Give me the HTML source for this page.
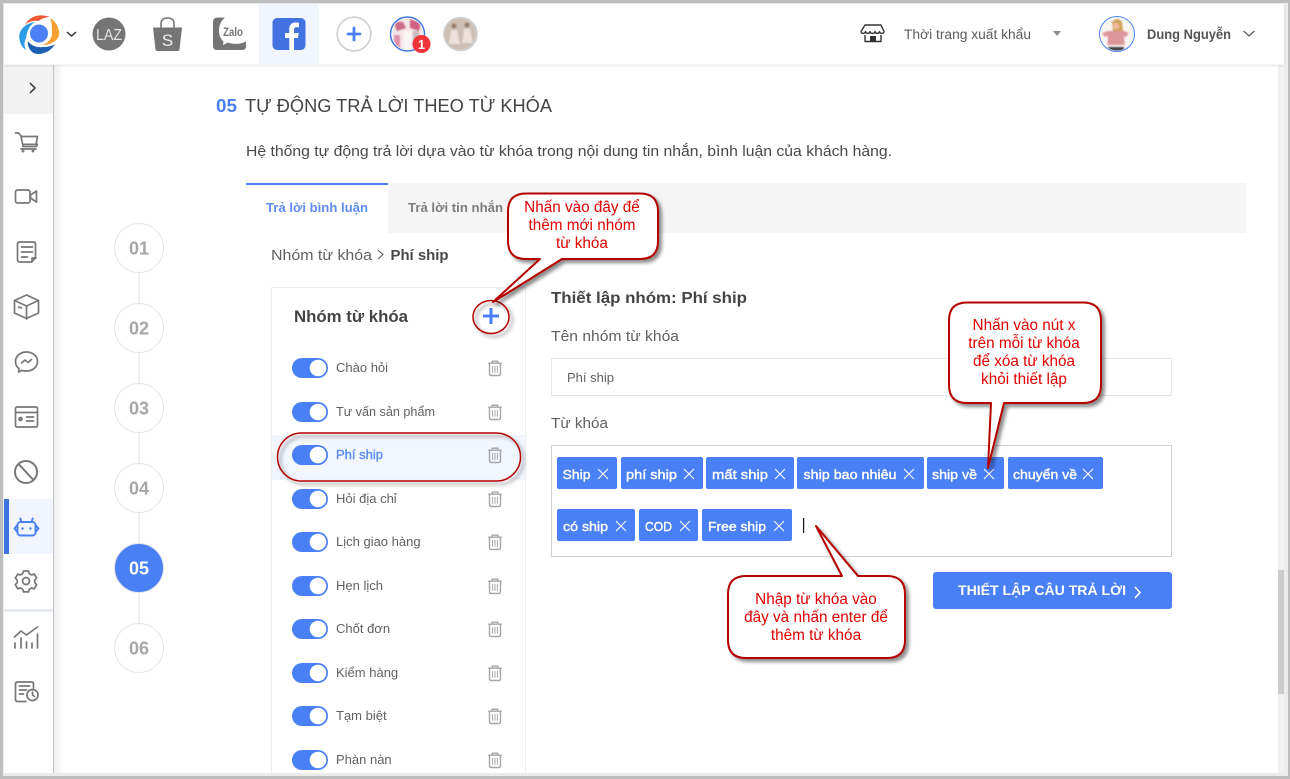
<!DOCTYPE html>
<html lang="vi">
<head>
<meta charset="utf-8">
<title>Tự động trả lời theo từ khóa</title>
<style>
html,body{margin:0;padding:0;background:#fff;width:1290px;height:779px;overflow:hidden}
svg{display:block}
text{font-family:"Liberation Sans",Arial,sans-serif}
.nav{fill:none;stroke:#777;stroke-width:1.7;stroke-linecap:round;stroke-linejoin:round}
.item{font-size:13px;fill:#616161}
.chip{font-size:13px;fill:#fff;stroke:#fff;stroke-width:.4}
.x{stroke:#fff;stroke-width:1.1;fill:none}
.red{font-size:15.300px;fill:#e00000;text-anchor:middle}
.co{fill:#fff;stroke:#b40000;stroke-width:2;stroke-linejoin:round;filter:url(#ds)}
.step{font-size:18px;font-weight:bold;fill:#a6a6a6;text-anchor:middle}
</style>
</head>
<body>
<svg width="1290" height="779" viewBox="0 0 1290 779" xmlns="http://www.w3.org/2000/svg">
<defs>
<filter id="ds" x="-20%" y="-20%" width="140%" height="140%"><feDropShadow dx="3" dy="3" stdDeviation="1.8" flood-color="#000" flood-opacity=".45"/></filter>
<filter id="hs" x="-5%" y="-20%" width="110%" height="150%"><feDropShadow dx="0" dy="1" stdDeviation="1.2" flood-color="#000" flood-opacity=".12"/></filter>
<filter id="b1"><feGaussianBlur stdDeviation=".9"/></filter>
<linearGradient id="sh" x1="0" x2="1"><stop offset="0" stop-color="#efefef"/><stop offset="1" stop-color="#fff"/></linearGradient>
<clipPath id="a1"><circle cx="407.500" cy="34" r="15.500"/></clipPath>
<clipPath id="a2"><circle cx="460" cy="34" r="15.500"/></clipPath>
<clipPath id="a3"><circle cx="1117" cy="34" r="16.500"/></clipPath>
<g id="trash" fill="none" stroke="#a6a6a6" stroke-width="1.400"><path d="M-6.800 -4.800H6.800M-2.800 -4.800V-6.800H2.800V-4.800"/><path d="M-5.500 -4.800V5.800Q-5.500 7.500 -4 7.500H4Q5.500 7.500 5.500 5.800V-4.800"/><path d="M-2.400 -2V4.800M0 -2V4.800M2.400 -2V4.800" stroke-width="1"/></g>
<g id="tog"><rect x="0" y="-10" width="36" height="20" rx="10" fill="#4a80f5"/><circle cx="26" cy="0" r="8.300" fill="#fff"/></g>
</defs>

<!-- window frame -->
<rect width="1290" height="779" fill="#bdbdbd"/>
<rect x="3" y="3" width="1285" height="773" fill="#ececec"/>
<rect x="4" y="4" width="1280" height="769" fill="#fff"/>

<!-- scrollbar -->
<rect x="1278" y="65" width="6" height="708" fill="#f1f1f1"/>
<rect x="1278" y="570" width="6" height="124" fill="#cbcbcb"/>

<!-- sidebar shadow -->
<rect x="54" y="65" width="10" height="708" fill="url(#sh)"/>
<rect x="53" y="65" width="1" height="708" fill="#c4c4c4"/>
<rect x="4" y="65" width="49" height="49" fill="#f2f2f2"/>
<path d="M30 83l5 5-5 5" fill="none" stroke="#333" stroke-width="1.500"/>

<!-- sidebar icons -->
<g class="nav">
<path d="M15.500 133h3l2.500 3 2 10.500h13.500l.8-2.200H23M21.500 136.500H37.500l-1.500 8"/><path d="M21 149h15"/><circle cx="23" cy="151" r=".6"/><circle cx="33" cy="151" r=".6"/>
<rect x="15.500" y="190" width="14.500" height="13" rx="2"/><path d="M30.500 195l6-4v11l-6-4z"/>
<path d="M32 262H20q-2.500 0-2.500-2.500V244q0-2 2-2h14q2 0 2 2v14l-4 4zM32 262v-4h4M21.500 247h11M21.500 252h11M21.500 257h6"/>
<path d="M26.500 295l12 5.500v12.500l-12 5.500-12-5.500v-12.500zM14.500 300.500l12 5.500 12-5.500M26.500 306v13M18.500 307l3 1"/>
<path d="M26.500 352c-6 0-11 4-11 9.500 0 3 1.400 5.500 3.500 7.200l-.5 3.300 3.500-1.700c1.400.5 3 .7 4.500.7 6 0 11-4 11-9.500s-5-9.500-11-9.500zM21.500 363l3.500-3 3 2.500 3.500-3"/>
<rect x="15.500" y="407" width="22" height="20" rx="1.500"/><path d="M15.500 412.500h22M26.500 417h7M26.500 421h7"/><circle cx="20.500" cy="419" r="1.500" fill="#777"/>
<circle cx="26" cy="472" r="11" stroke-width="2"/><path d="M18.500 464l15 16" stroke-width="2"/>
</g>
<rect x="4" y="499" width="49" height="55" fill="#f0f5ff"/>
<rect x="4" y="499" width="5" height="55" fill="#3f73e0"/>
<g fill="none" stroke="#4a80f5" stroke-width="1.900" stroke-linecap="round" stroke-linejoin="round">
<rect x="17.500" y="522" width="18" height="13.500" rx="3"/><path d="M17 525.500l-2.500 3 2.500 3M36 525.500l2.500 3-2.500 3M21 520.500l-.8-2M32 520.500l.8-2"/>
</g>
<circle cx="22.500" cy="528.500" r="1.200" fill="#4a80f5"/><circle cx="30.500" cy="528.500" r="1.200" fill="#4a80f5"/>
<g class="nav">
<circle cx="26" cy="581" r="3.500"/>
<path d="M23.500 571h5l.8 2.700 2.200 1.200 2.800-.8 2.400 4.100-2 2 .0 2.500 2 2-2.400 4.100-2.800-.8-2.200 1.200-.8 2.700h-5l-.8-2.700-2.200-1.200-2.800.8-2.400-4.100 2-2v-2.500l-2-2 2.400-4.100 2.800.8 2.200-1.200z"/>
</g>
<rect x="4" y="609" width="49" height="3" fill="#e6ebf2"/>
<g class="nav">
<path d="M14.500 637l6.500-6 5.500 4 11-8"/><path d="M15 648v-5M21 648v-10M26.500 648v-6M32 648v-5M37.500 648v-14"/>
<path d="M26 701.500H17.500q-2 0-2-2V684q0-2 2-2h14q2 0 2 2v4M19.500 686h10M19.500 690h7M19.500 694h4"/><circle cx="32.500" cy="695" r="5.500"/><path d="M32.500 692v3l2 1.500"/>
</g>

<!-- header -->
<g filter="url(#hs)"><rect x="4" y="4" width="1280" height="60.500" fill="#fff"/></g>
<rect x="259" y="4" width="60" height="60" fill="#f1f5fe"/>

<!-- logo -->
<path d="M25 25C29 17 38 13 50 17C44 17 40 20 38 21C33 20 28 22 25 25Z" fill="#ee5a34"/>
<path d="M50 18C57 22 60 30 59 35C58 41 50 45 43 45C49 42 52 38 52 33C52 28 52 22 50 18Z" fill="#f6a031"/>
<path d="M28 41C31 46 38 48 43 47C48 47 52 46 55 44C52 50 45 54 38 54C32 54 27 48 28 41Z" fill="#1d5fb2"/>
<path d="M35 22C27 23 21 28 19.500 34C18.500 40 21 47 26 50C24 46 24 42 26 38C27 30 30 25 35 22Z" fill="#2a9be6"/>
<circle cx="39" cy="33.500" r="9" fill="#4c80f7"/>
<path d="M67 32l4.500 4 4.500-4" fill="none" stroke="#333" stroke-width="1.500"/>

<!-- LAZ -->
<circle cx="109" cy="34" r="16.500" fill="#757575"/>
<text x="109" y="40" font-size="16" fill="#e4e4e4" text-anchor="middle" textLength="26" lengthAdjust="spacingAndGlyphs">LAZ</text>
<!-- Shopee -->
<path d="M153 27.500h29l-2.500 22q-.2 1.500-2 1.500h-20q-1.800 0-2-1.500z" fill="#757575"/>
<path d="M161 27.500v-3.500q0-6 6.500-6t6.500 6v3.500" fill="none" stroke="#757575" stroke-width="1.600"/>
<text x="167.500" y="46" font-size="17" fill="#eee" text-anchor="middle">S</text>
<!-- Zalo -->
<path d="M218 17.500h7c-4 3-6 8-6 13 0 6 2.500 9 4.500 11l-.5 3.500 5-2.500c5 2 12 2 18-1v5q0 3.500-3.500 3.500H217q-4 0-4-4V22q0-4.500 5-4.500z" fill="#757575"/>
<text x="233" y="36" font-size="12" font-weight="bold" fill="#757575" text-anchor="middle" textLength="20" lengthAdjust="spacingAndGlyphs">Zalo</text>
<!-- Facebook -->
<rect x="272.500" y="18" width="33" height="32" rx="4.500" fill="#4373e0"/>
<path d="M294 50V38h4l.7-5H294v-3.200c0-1.500.7-2.500 2.600-2.500h2.400v-4.500c-1-.1-2.300-.3-3.500-.3-3.700 0-6.200 2.200-6.200 6.300V33H285v5h4.300v12z" fill="#fff"/>
<!-- plus -->
<circle cx="354" cy="34" r="16.800" fill="#fff" stroke="#cfcfcf" stroke-width="1.600"/>
<path d="M354 28v12M348 34h12" stroke="#4a80f5" stroke-width="2.800" stroke-linecap="round"/>
<!-- shop avatar 1 -->
<circle cx="407.500" cy="34" r="17" fill="#fff" stroke="#3f73e0" stroke-width="1.500"/>
<g clip-path="url(#a1)"><rect x="390" y="17" width="36" height="36" fill="#f3e6e9"/><g filter="url(#b1)"><path d="M393 21l10 1 3 6-9 3z" fill="#cf6d8a"/><path d="M410 19l11 4-2 8-9-3z" fill="#d0607f"/><rect x="394" y="35" width="6" height="14" fill="#e091aa"/><rect x="404" y="31" width="7" height="19" fill="#faf6f6"/><rect x="413" y="31" width="6" height="14" fill="#c9b8bd"/></g></g>
<circle cx="421.500" cy="44" r="9" fill="#f0353a"/>
<text x="421.500" y="49" font-size="12.500" font-weight="bold" fill="#fff" text-anchor="middle">1</text>
<!-- shop avatar 2 -->
<circle cx="460.500" cy="34" r="17.300" fill="#cfcfcf"/>
<g clip-path="url(#a2)"><rect x="444" y="18" width="33" height="33" fill="#cdbfb3"/><g filter="url(#b1)"><circle cx="454" cy="26" r="2.500" fill="#9a7e6c"/><circle cx="467" cy="25" r="2.500" fill="#9a7e6c"/><path d="M451 30h6l3 14h-11z" fill="#ece2db"/><path d="M464 29h6l3 14h-11z" fill="#ece2db"/></g></g>

<!-- header right -->
<g fill="none" stroke="#333" stroke-width="1.400" stroke-linejoin="round">
<path d="M865 25h16l3 6.500c0 2.500-4 2.500-4.500 0-.5 2.500-4 2.500-4.500 0-.5 2.500-4.500 2.500-5 0-.5 2.500-4 2.500-4.500 0-.5 2.500-4.500 2.500-4.500 0z"/><path d="M865 35v6.500h16V35"/></g>
<rect x="870" y="36" width="6" height="5.500" fill="#333"/>
<text x="904" y="39" font-size="13.500" fill="#5c5c5c" textLength="127" lengthAdjust="spacingAndGlyphs">Thời trang xuất khẩu</text>
<path d="M1053 31h8l-4 5z" fill="#8e8e8e"/>
<circle cx="1117" cy="34" r="17.500" fill="#fff" stroke="#4a80f5" stroke-width="1"/>
<g clip-path="url(#a3)"><rect x="1100" y="17" width="34" height="34" fill="#f8f5f2"/><g filter="url(#b1)"><path d="M1112 22q6-6 10 0l1 9h-10z" fill="#d0a35c"/><circle cx="1116" cy="26" r="3.300" fill="#eeb99c"/><path d="M1102 33l6-2h16l5 2-3 4-2-1 .5 9h-17l.5-9-3 1z" fill="#dd979c"/><rect x="1108" y="47" width="16" height="5" fill="#444"/></g></g>
<text x="1147" y="39" font-size="13.500" font-weight="bold" fill="#555" textLength="84" lengthAdjust="spacingAndGlyphs">Dung Nguyễn</text>
<path d="M1243.500 31l5.500 5 5.500-5" fill="none" stroke="#555" stroke-width="1.200"/>

<!-- page heading -->
<text x="216" y="112" font-size="18" font-weight="bold" fill="#4a80f5" textLength="21" lengthAdjust="spacingAndGlyphs">05</text>
<text x="245" y="112" font-size="18" fill="#444" textLength="307" lengthAdjust="spacingAndGlyphs">TỰ ĐỘNG TRẢ LỜI THEO TỪ KHÓA</text>
<text x="246" y="156" font-size="15" fill="#484848" textLength="646" lengthAdjust="spacingAndGlyphs">Hệ thống tự động trả lời dựa vào từ khóa trong nội dung tin nhắn, bình luận của khách hàng.</text>

<!-- steps -->
<path d="M139 250V650" stroke="#e2e2e2" stroke-width="1"/>
<g fill="#fff" stroke="#e4e4e4" stroke-width="1">
<circle cx="139" cy="248" r="24.500"/><circle cx="139" cy="328" r="24.500"/><circle cx="139" cy="408" r="24.500"/><circle cx="139" cy="488" r="24.500"/><circle cx="139" cy="648" r="24.500"/>
</g>
<circle cx="139" cy="568" r="24.500" fill="#4a80f5" stroke="#e4e4e4"/>
<text class="step" x="139" y="254.500">01</text>
<text class="step" x="139" y="334.500">02</text>
<text class="step" x="139" y="414.500">03</text>
<text class="step" x="139" y="494.500">04</text>
<text class="step" x="139" y="574.500" style="fill:#fff">05</text>
<text class="step" x="139" y="654.500">06</text>

<!-- tabs -->
<rect x="246" y="183" width="1000" height="50" fill="#f5f5f5"/>
<rect x="246" y="183" width="142" height="50" fill="#fff"/>
<rect x="246" y="183" width="142" height="2" fill="#4a80f5"/>
<text x="266" y="212" font-size="13" font-weight="bold" fill="#5d8df5" textLength="102" lengthAdjust="spacingAndGlyphs">Trả lời bình luận</text>
<text x="408" y="212" font-size="13" font-weight="bold" fill="#7d7d7d" textLength="95" lengthAdjust="spacingAndGlyphs">Trả lời tin nhắn</text>

<!-- breadcrumb -->
<text x="271" y="260" font-size="15" fill="#616161" textLength="101" lengthAdjust="spacingAndGlyphs">Nhóm từ khóa</text>
<path d="M378 250l5 4.500-5 4.500" fill="none" stroke="#616161" stroke-width="1.100"/>
<text x="390.500" y="260" font-size="15" font-weight="bold" fill="#484848" textLength="58" lengthAdjust="spacingAndGlyphs">Phí ship</text>

<!-- keyword group panel -->
<rect x="271.500" y="287.500" width="254" height="490" fill="#fff" stroke="#eee"/>
<text x="294" y="322" font-size="17" font-weight="bold" fill="#444" textLength="114" lengthAdjust="spacingAndGlyphs">Nhóm từ khóa</text>
<path d="M491 308v16M483 316h16" stroke="#4a80f5" stroke-width="3"/>
<rect x="272" y="436" width="253" height="43" fill="#f2f6ff"/>
<path d="M272 436H525M272 479H525" stroke="#eceff5"/>

<use href="#tog" x="292" y="368"/><text class="item" x="336" y="372">Chào hỏi</text><use href="#trash" x="495" y="368"/>
<use href="#tog" x="292" y="412"/><text class="item" x="336" y="416" textLength="99" lengthAdjust="spacingAndGlyphs">Tư vấn sản phẩm</text><use href="#trash" x="495" y="412"/>
<use href="#tog" x="292" y="455"/><text class="item" x="336" y="459" style="fill:#5d8df5;stroke:#5d8df5;stroke-width:.4" textLength="47" lengthAdjust="spacingAndGlyphs">Phí ship</text><use href="#trash" x="495" y="455"/>
<use href="#tog" x="292" y="499"/><text class="item" x="336" y="503">Hỏi địa chỉ</text><use href="#trash" x="495" y="499"/>
<use href="#tog" x="292" y="542"/><text class="item" x="336" y="546">Lịch giao hàng</text><use href="#trash" x="495" y="542"/>
<use href="#tog" x="292" y="586"/><text class="item" x="336" y="590">Hẹn lịch</text><use href="#trash" x="495" y="586"/>
<use href="#tog" x="292" y="629"/><text class="item" x="336" y="633">Chốt đơn</text><use href="#trash" x="495" y="629"/>
<use href="#tog" x="292" y="673"/><text class="item" x="336" y="677">Kiểm hàng</text><use href="#trash" x="495" y="673"/>
<use href="#tog" x="292" y="716"/><text class="item" x="336" y="720">Tạm biệt</text><use href="#trash" x="495" y="716"/>
<use href="#tog" x="292" y="760"/><text class="item" x="336" y="764">Phàn nàn</text><use href="#trash" x="495" y="760"/>

<!-- bottom cover for frame -->
<rect x="4" y="773" width="1284" height="3" fill="#ececec"/>
<rect x="0" y="776" width="1290" height="3" fill="#bdbdbd"/>

<!-- right form -->
<text x="551" y="303" font-size="16" font-weight="bold" fill="#444" textLength="196" lengthAdjust="spacingAndGlyphs">Thiết lập nhóm: Phí ship</text>
<text x="551" y="341" font-size="15" fill="#616161" textLength="128" lengthAdjust="spacingAndGlyphs">Tên nhóm từ khóa</text>
<rect x="551.500" y="358.500" width="620" height="37" rx="1" fill="#fff" stroke="#e6e6e6"/>
<text x="567" y="382" font-size="13" fill="#616161">Phí ship</text>
<text x="551" y="428" font-size="15" fill="#616161" textLength="57" lengthAdjust="spacingAndGlyphs">Từ khóa</text>
<rect x="551.500" y="445.500" width="620" height="111" fill="#fff" stroke="#cfcfcf"/>

<!-- chips -->
<g fill="#4a80f5">
<rect x="557" y="457" width="60" height="32" rx="2"/><rect x="621" y="457" width="82" height="32" rx="2"/><rect x="706" y="457" width="88" height="32" rx="2"/><rect x="797" y="457" width="127" height="32" rx="2"/><rect x="927" y="457" width="77" height="32" rx="2"/><rect x="1008" y="457" width="95" height="32" rx="2"/>
<rect x="557" y="509" width="78" height="32" rx="2"/><rect x="639" y="509" width="59" height="32" rx="2"/><rect x="702" y="509" width="90" height="32" rx="2"/>
</g>
<text class="chip" x="562.500" y="479" textLength="28" lengthAdjust="spacingAndGlyphs">Ship</text>
<text class="chip" x="626" y="479" textLength="51" lengthAdjust="spacingAndGlyphs">phí ship</text>
<text class="chip" x="712" y="479" textLength="56" lengthAdjust="spacingAndGlyphs">mất ship</text>
<text class="chip" x="803.500" y="479" textLength="93" lengthAdjust="spacingAndGlyphs">ship bao nhiêu</text>
<text class="chip" x="932" y="479" textLength="45" lengthAdjust="spacingAndGlyphs">ship về</text>
<text class="chip" x="1013" y="479" textLength="64" lengthAdjust="spacingAndGlyphs">chuyển về</text>
<text class="chip" x="563" y="531" textLength="45" lengthAdjust="spacingAndGlyphs">có ship</text>
<text class="chip" x="645" y="531" textLength="27" lengthAdjust="spacingAndGlyphs">COD</text>
<text class="chip" x="708" y="531" textLength="58" lengthAdjust="spacingAndGlyphs">Free ship</text>
<g class="x">
<path d="M598 469l10 10M608 469l-10 10"/><path d="M684 469l10 10M694 469l-10 10"/><path d="M775 469l10 10M785 469l-10 10"/><path d="M904 469l10 10M914 469l-10 10"/><path d="M984 469l10 10M994 469l-10 10"/><path d="M1083 469l10 10M1093 469l-10 10"/>
<path d="M616 521l10 10M626 521l-10 10"/><path d="M680 521l10 10M690 521l-10 10"/><path d="M774 521l10 10M784 521l-10 10"/>
</g>
<rect x="803" y="518" width="1.200" height="15" fill="#111"/>

<!-- button -->
<rect x="933" y="572" width="239" height="37" rx="3" fill="#4a80f5"/>
<text x="958" y="595" font-size="14" font-weight="bold" fill="#fff" textLength="168" lengthAdjust="spacingAndGlyphs">THIẾT LẬP CÂU TRẢ LỜI</text>
<path d="M1135 587l5 5.500-5 5.500" fill="none" stroke="#fff" stroke-width="1.600"/>

<!-- annotation ellipses -->
<ellipse cx="491" cy="317" rx="18" ry="16.500" fill="none" stroke="#b40000" stroke-width="1.500" filter="url(#ds)"/>
<rect x="277.500" y="433" width="243" height="48" rx="24" fill="none" stroke="#b40000" stroke-width="1.500" filter="url(#ds)"/>

<!-- callouts -->
<path class="co" d="M526 193.500H640Q658 193.500 658 211.500V241Q658 259 640 259H562L493 302L540 259H526Q508 259 508 241V211.500Q508 193.500 526 193.500Z"/>
<text class="red" x="582" y="212">Nhấn vào đây để</text>
<text class="red" x="582" y="230">thêm mới nhóm</text>
<text class="red" x="582" y="248">từ khóa</text>

<path class="co" d="M967 302.500H1083Q1101 302.500 1101 320.500V385Q1101 403 1083 403H1004L988 468L991 403H967Q949 403 949 385V320.500Q949 302.500 967 302.500Z"/>
<text class="red" x="1024" y="330">Nhấn vào nút x</text>
<text class="red" x="1024" y="348">trên mỗi từ khóa</text>
<text class="red" x="1024" y="366">để xóa từ khóa</text>
<text class="red" x="1024" y="384">khỏi thiết lập</text>

<path class="co" d="M746 576H842L816 526L858 576H887Q905 576 905 594V640Q905 658 887 658H746Q728 658 728 640V594Q728 576 746 576Z"/>
<text class="red" x="816" y="604">Nhập từ khóa vào</text>
<text class="red" x="816" y="622">đây và nhấn enter để</text>
<text class="red" x="816" y="640">thêm từ khóa</text>
</svg>
</body>
</html>
